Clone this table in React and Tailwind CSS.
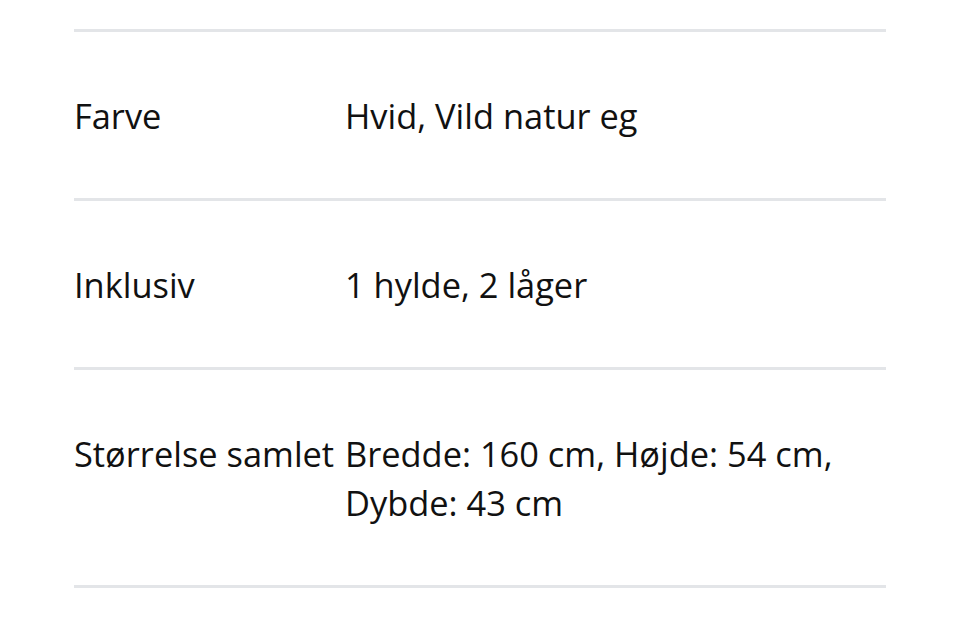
const rows = [
  { label: 'Farve', value: 'Hvid, Vild natur eg' },
  { label: 'Inklusiv', value: '1 hylde, 2 låger' },
  { label: 'Størrelse samlet', value: 'Bredde: 160 cm, Højde: 54 cm, Dybde: 43 cm' },
]

function App() {
  return (
    <main
      className="min-h-screen bg-white pt-[29px] text-[#111111]"
      style={{ fontFamily: '"Open Sans", "Noto Sans", sans-serif' }}
    >
      <dl className="mx-[74px] w-[812px] border-b-[3px] border-[#e3e5e8]">
        {rows.map((row) => (
          <div
            key={row.label}
            className="flex border-t-[3px] border-[#e3e5e8] py-[58.5px] text-[34.4px] leading-[49px]"
          >
            <dt className="w-[271px] shrink-0 whitespace-nowrap">{row.label}</dt>
            <dd className="w-[510px]">{row.value}</dd>
          </div>
        ))}
      </dl>
    </main>
  )
}

export default App
